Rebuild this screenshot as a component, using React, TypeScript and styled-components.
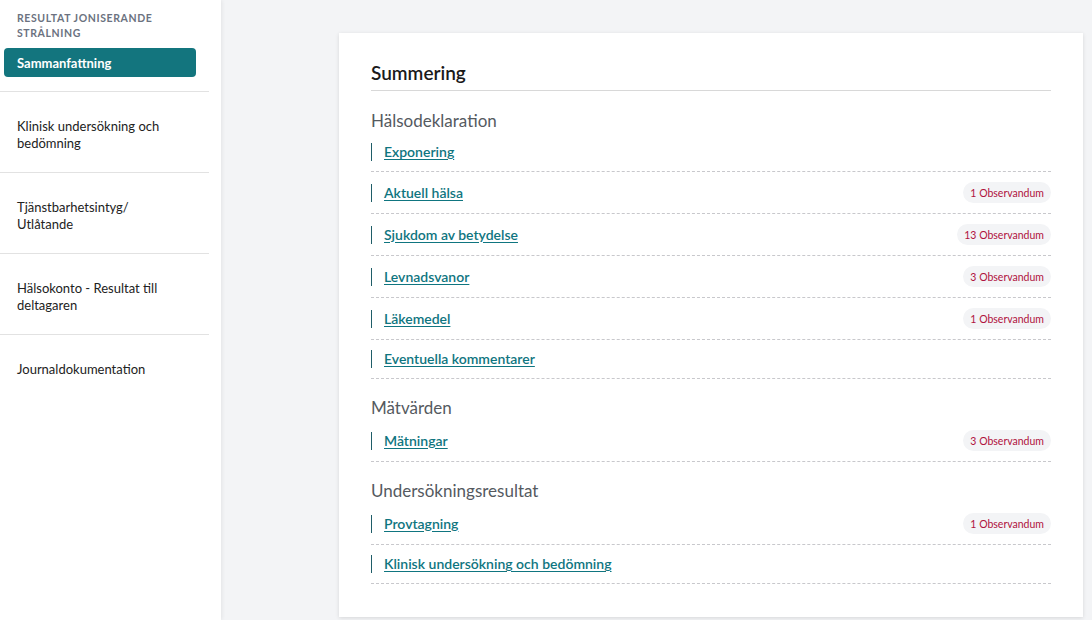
import React from 'react';
import styled, { createGlobalStyle } from 'styled-components';

const GlobalStyle = createGlobalStyle`
  html, body {
    margin: 0;
    padding: 0;
    height: 100%;
    background: #f3f4f6;
    font-family: Lato, "Noto Sans", sans-serif;
  }
  #root {
    height: 100%;
  }
`;

const Layout = styled.div`
  display: flex;
  height: 620px;
  overflow: hidden;
`;

const Sidebar = styled.aside`
  width: 221px;
  flex-shrink: 0;
  background: #ffffff;
  box-shadow: 1px 0 4px rgba(0, 0, 0, 0.07);
  padding: 11px 12px 0 0;
  box-sizing: border-box;
  position: relative;
  z-index: 1;
`;

const GroupLabel = styled.div`
  padding: 0 17px;
  font-size: 10.5px;
  line-height: 15px;
  font-weight: 700;
  letter-spacing: 0.6px;
  text-transform: uppercase;
  color: #6b7280;
`;

const ActiveItem = styled.div`
  margin: 7px 13px 14px 4px;
  height: 29px;
  display: flex;
  align-items: center;
  padding: 0 13px;
  border-radius: 4px;
  background: #13757e;
  color: #ffffff;
  font-size: 13px;
  font-weight: 700;
`;

const NavItem = styled.div`
  border-top: 1px solid #e2e2e2;
  padding: 26px 40px 20px 17px;
  font-size: 13px;
  line-height: 17px;
  color: #222;
`;

const Main = styled.main`
  flex: 1;
  padding: 33px 9px 0 118px;
  box-sizing: border-box;
`;

const Card = styled.section`
  display: flex;
  flex-direction: column;
  background: #ffffff;
  box-shadow: 0 1px 4px rgba(0, 0, 0, 0.12);
  padding: 30px 32px 33px;
`;

const Title = styled.h2`
  margin: 0 0 1px;
  padding-bottom: 7px;
  border-bottom: 1px solid #d8d8d8;
  font-size: 19px;
  line-height: 20px;
  font-weight: 600;
  color: #1a1a1a;
`;

const Group = styled.div`
  margin-top: 17px;
`;

const GroupTitle = styled.h3`
  margin: 0;
  font-size: 17px;
  line-height: 24px;
  font-weight: 400;
  color: #555a5f;
`;

const Row = styled.div`
  display: flex;
  align-items: center;
  justify-content: space-between;
  padding: 10px 0;
  border-bottom: 1px dashed #c8c8cc;
`;

const RowLink = styled.a`
  border-left: 1px solid #1f5d68;
  padding-left: 12px;
  font-size: 14px;
  line-height: 18px;
  font-weight: 600;
  color: #0f7580;
  text-decoration: underline;
  text-underline-offset: 2px;
  cursor: pointer;
`;

const Badge = styled.span`
  display: inline-flex;
  align-items: center;
  height: 21px;
  padding: 0 7px;
  border-radius: 11px;
  background: #f3f4f6;
  color: #b0123d;
  font-size: 10.5px;
`;

type Item = { label: string; count?: number };

const groups: { title: string; items: Item[] }[] = [
  {
    title: 'Hälsodeklaration',
    items: [
      { label: 'Exponering' },
      { label: 'Aktuell hälsa', count: 1 },
      { label: 'Sjukdom av betydelse', count: 13 },
      { label: 'Levnadsvanor', count: 3 },
      { label: 'Läkemedel', count: 1 },
      { label: 'Eventuella kommentarer' },
    ],
  },
  {
    title: 'Mätvärden',
    items: [{ label: 'Mätningar', count: 3 }],
  },
  {
    title: 'Undersökningsresultat',
    items: [
      { label: 'Provtagning', count: 1 },
      { label: 'Klinisk undersökning och bedömning' },
    ],
  },
];

const navItems = [
  'Klinisk undersökning och bedömning',
  'Tjänstbarhetsintyg/ Utlåtande',
  'Hälsokonto - Resultat till deltagaren',
  'Journaldokumentation',
];

const App: React.FC = () => {
  return (
    <>
      <GlobalStyle />
      <Layout>
        <Sidebar>
          <GroupLabel>Resultat joniserande strålning</GroupLabel>
          <ActiveItem>Sammanfattning</ActiveItem>
          {navItems.map((item) => (
            <NavItem key={item}>{item}</NavItem>
          ))}
        </Sidebar>
        <Main>
          <Card>
            <Title>Summering</Title>
            {groups.map((group) => (
              <Group key={group.title}>
                <GroupTitle>{group.title}</GroupTitle>
                {group.items.map((item) => (
                  <Row key={item.label}>
                    <RowLink>{item.label}</RowLink>
                    {item.count !== undefined && <Badge>{item.count} Observandum</Badge>}
                  </Row>
                ))}
              </Group>
            ))}
          </Card>
        </Main>
      </Layout>
    </>
  );
};

export default App;
